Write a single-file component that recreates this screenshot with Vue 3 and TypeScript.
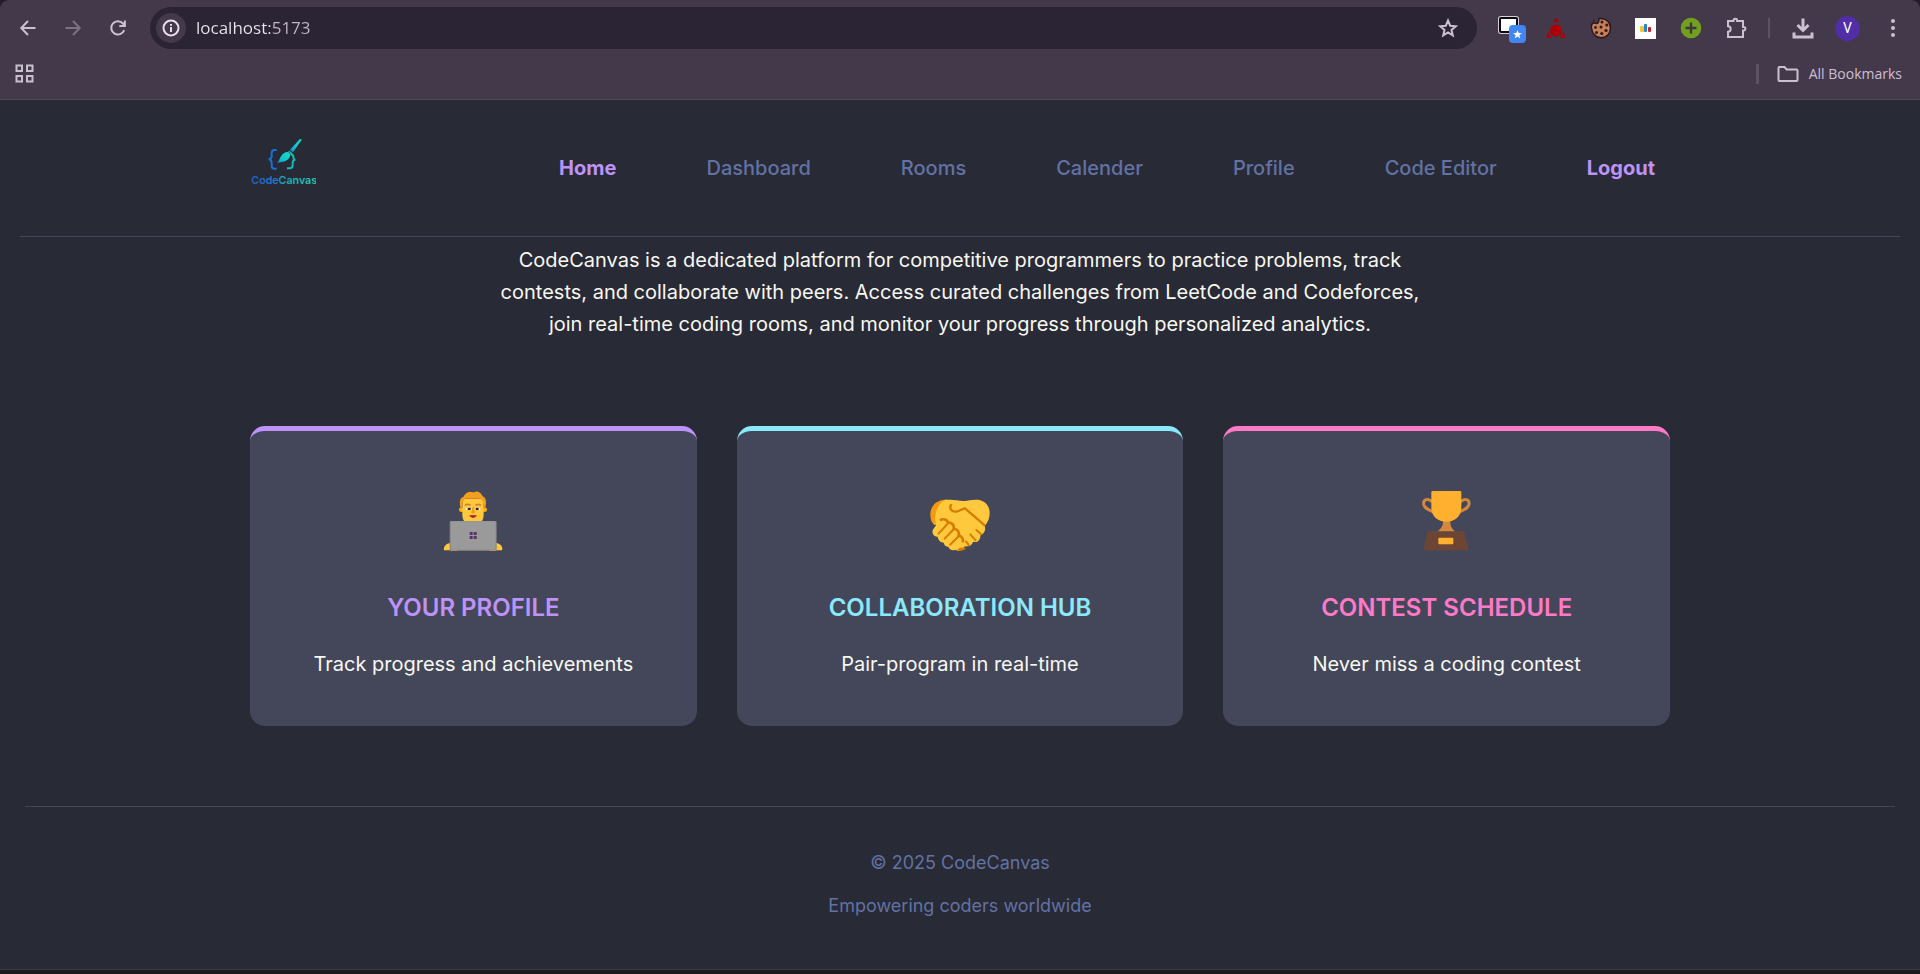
<script setup lang="ts">
import { ref } from 'vue'

interface NavItem {
  label: string
  strong: boolean
}

interface Card {
  kind: 'profile' | 'collab' | 'contest'
  title: string
  text: string
}

const address = ref<string>('localhost:5173')

const navItems: NavItem[] = [
  { label: 'Home', strong: true },
  { label: 'Dashboard', strong: false },
  { label: 'Rooms', strong: false },
  { label: 'Calender', strong: false },
  { label: 'Profile', strong: false },
  { label: 'Code Editor', strong: false },
]

const cards: Card[] = [
  { kind: 'profile', title: 'Your Profile', text: 'Track progress and achievements' },
  { kind: 'collab', title: 'Collaboration Hub', text: 'Pair-program in real-time' },
  { kind: 'contest', title: 'Contest Schedule', text: 'Never miss a coding contest' },
]
</script>

<template>
  <div class="window">
    <div class="chrome">
      <div class="toolbar">
        <button class="tool" type="button" aria-label="Back">
          <svg width="20" height="20" viewBox="0 0 20 20" class="line"><path d="M17.5 10H4M10 3 3.300 10 10 17" /></svg>
        </button>
        <button class="tool dim" type="button" aria-label="Forward">
          <svg width="20" height="20" viewBox="0 0 20 20" class="line"><path d="M2.500 10H16M10 3l6.700 7L10 17" /></svg>
        </button>
        <button class="tool" type="button" aria-label="Reload">
          <svg width="20" height="20" viewBox="0 0 20 20" class="line"><path d="M16.200 12.200A6.700 6.700 0 1 1 15 5.500L16.500 7.300M16.900 2.500V8H11.300" /></svg>
        </button>
        <div class="omnibox">
          <button class="info" type="button" aria-label="Site information">
            <svg width="18" height="18" viewBox="0 0 18 18" class="line"><circle cx="9" cy="9" r="7.500" /><path d="M9 8v5M9 5v1.800" /></svg>
          </button>
          <input v-model="address" class="address" type="text" aria-label="Address" spellcheck="false" />
          <button class="info plain" type="button" aria-label="Bookmark this page">
            <svg width="20" height="20" viewBox="0 0 20 20" class="line"><path d="M10 2.500l2.200 5.200 5.600.5-4.300 3.700 1.300 5.500-4.800-2.900-4.800 2.900 1.300-5.500L2.200 8.200l5.600-.5z" /></svg>
          </button>
        </div>
        <button class="tool" type="button" aria-label="Window bookmark extension">
          <svg width="30" height="38" viewBox="0 -3 30 38">
            <rect x="2" y="4" width="21" height="18" rx="3" fill="#d5cfda" />
            <rect x="4" y="6" width="17" height="14" rx="1" fill="#fff" stroke="#0c0a0e" stroke-width="2" />
            <rect x="13" y="13" width="17" height="18" rx="4" fill="#4285f4" />
            <path d="M21.500 18l1.200 3 3.200.2-2.500 2 .9 3.200-2.800-1.800-2.800 1.800.9-3.200-2.500-2 3.200-.2z" fill="#fff" />
          </svg>
        </button>
        <button class="tool" type="button" aria-label="Red extension">
          <svg width="22" height="22" viewBox="0 0 22 22" fill="#ad0006">
            <circle cx="11" cy="13.500" r="6" /><path d="M11 .5l3.500 5a8 8 0 0 0-7 0zM1 21l2.500-6.500A9 9 0 0 0 7.500 20.500zM21 21l-2.500-6.500a9 9 0 0 1-4 6z" />
          </svg>
        </button>
        <button class="tool" type="button" aria-label="Cookie extension">
          <svg width="22" height="22" viewBox="0 0 22 22">
            <path d="M9 1.500c-.5 3 .5 4.500-2 5-1.500.2-2-.5-3-.7-1.500.3-3 2-2.500 5.200C2 16.800 6 20.700 11 20.700c5.500 0 9.500-4.200 9.500-9.700S16.500 1 9 1.500z" fill="#c97f55" stroke="#241820" stroke-width="1.500" />
            <g fill="#2c1b22"><circle cx="12" cy="5" r="1.500" /><circle cx="16.800" cy="8" r="1.600" /><circle cx="11" cy="10" r="1.500" /><circle cx="5.500" cy="10.500" r="1.400" /><circle cx="16" cy="13.500" r="1.600" /><circle cx="6.500" cy="15.500" r="1.500" /><circle cx="11.800" cy="16.500" r="1.600" /></g>
            <path d="M3 3.500h1.500" stroke="#241820" stroke-width="1.500" />
          </svg>
        </button>
        <button class="tool" type="button" aria-label="Chart extension">
          <svg width="21" height="21" viewBox="0 0 21 21">
            <path d="M0 0h21v21H0z" fill="#fff" /><rect x="5" y="8" width="4" height="6" rx="1" fill="#f5c63a" /><rect x="9" y="6" width="3" height="8" rx="1" fill="#2385d0" /><rect x="13" y="9" width="3" height="5" rx="1" fill="#cb1d2a" />
          </svg>
        </button>
        <button class="tool" type="button" aria-label="Add extension">
          <svg width="22" height="22" viewBox="0 0 22 22"><circle cx="11" cy="11" r="10.300" fill="#739f1e" /><path d="M11 5.500v11M5.500 11h11" stroke="#3d3644" stroke-width="2.400" /></svg>
        </button>
        <button class="tool" type="button" aria-label="Extensions">
          <svg width="22" height="22" viewBox="0 0 22 22" class="line">
            <path d="M3 4h5.500V3.500a1.800 1.800 0 0 1 3.600 0V4H18v6h.6a1.800 1.800 0 0 1 0 3.600H18V20H3v-5.200c3.600-.3 3.600-5.300 0-5.600z" />
          </svg>
        </button>
        <span class="divider"></span>
        <button class="tool" type="button" aria-label="Downloads">
          <svg width="22" height="22" viewBox="0 0 22 22" class="line heavy"><path d="M11 1.500v12M5.500 8l5.500 5.500L16.500 8M2 15.500V20h18v-4.500" /></svg>
        </button>
        <button class="tool" type="button" aria-label="Account"><span class="avatar">V</span></button>
        <button class="tool" type="button" aria-label="Menu">
          <svg width="20" height="20" viewBox="0 0 20 20" fill="#cdbfd3"><circle cx="10" cy="3" r="2" /><circle cx="10" cy="10" r="2" /><circle cx="10" cy="17" r="2" /></svg>
        </button>
      </div>
      <div class="bookmarks">
        <button class="apps" type="button" aria-label="Tab groups">
          <svg width="19" height="19" viewBox="0 0 19 19" fill="none" stroke="#c9c0cf" stroke-width="2"><path d="M1.500 1.500h5.500v5.500H1.500zM12 1.500h5.500v5.500H12zM1.500 12h5.500v5.500H1.500zM12 12h5.500v5.500H12z" /></svg>
        </button>
        <span class="divider wide"></span>
        <button class="all" type="button">
          <svg width="22" height="18" viewBox="0 0 22 18" class="line"><path d="M2.500 2h5l2.200 2.500h9.800q1 0 1 1V15q0 1-1 1h-17q-1 0-1-1V3q0-1 1-1z" /></svg>
          All Bookmarks
        </button>
      </div>
    </div>

    <div class="page">
      <header class="header">
        <nav class="nav" aria-label="Main">
          <a class="logo" href="#" aria-label="CodeCanvas home">
            <svg width="66" height="72" viewBox="60 36 198 216">
              <defs>
                <linearGradient id="brand" gradientUnits="userSpaceOnUse" x1="65" y1="0" x2="255" y2="0">
                  <stop offset="0" stop-color="#1f5fc4" /><stop offset=".4" stop-color="#1c7fd0" /><stop offset=".5" stop-color="#18acb5" /><stop offset="1" stop-color="#1fcbb4" />
                </linearGradient>
                <linearGradient id="brush" x1="0" y1="1" x2="1" y2="0">
                  <stop offset="0" stop-color="#1582d8" /><stop offset=".45" stop-color="#12c7cf" /><stop offset="1" stop-color="#12dfc0" />
                </linearGradient>
              </defs>
              <path d="M140 90h-6q-9 0-9 9v9q0 9-9 10 9 1 9 10v9q0 9 9 9h6" fill="none" stroke="#1771d2" stroke-width="6" />
              <path d="M181 103h1q8 0 8 8 0 7 6 8-8 1-8 9v8q0 9-9 9h-8" fill="none" stroke="#14bcae" stroke-width="6" />
              <path d="M138 130c10-5 9-13 16-23 6-9 18-14 24-9 6 8 0 19-8 23-10 6-20 5-32 9z" fill="url(#brush)" />
              <path d="M180 89l9 8 25-36q1-6-5-3z" fill="url(#brush)" />
              <path d="M176 93l10 8" stroke="#12c8c0" stroke-width="4" />
              <text x="64" y="193" class="wordmark" fill="url(#brand)">CodeCanvas</text>
            </svg>
          </a>
          <div class="links">
            <a v-for="item in navItems" :key="item.label" href="#" :class="{ strong: item.strong }">{{ item.label }}</a>
            <button class="strong" type="button">Logout</button>
          </div>
        </nav>
      </header>

      <main class="main">
        <p class="intro">
          CodeCanvas is a dedicated platform for competitive programmers to practice problems, track contests, and
          collaborate with peers. Access curated challenges from LeetCode and Codeforces, join real-time coding rooms,
          and monitor your progress through personalized analytics.
        </p>

        <section class="cards">
          <article v-for="card in cards" :key="card.kind" class="card" :class="card.kind">
            <svg v-if="card.kind === 'profile'" width="60" height="60" viewBox="70 93 180 180" aria-hidden="true">
              <path d="M73 271c-3-11 8-22 20-22h134c14 0 24 11 20 22z" fill="#ffc83d" />
              <circle cx="125" cy="149" r="7" fill="#ffb000" /><circle cx="195" cy="149" r="7" fill="#ffb000" />
              <path d="M128 117h64v44c0 18-6 26-16 28h-32c-10-2-16-10-16-28z" fill="#ffc83d" />
              <path d="M122 142c-3-17-2-28 9-31 4-10 13-17 22-16q7 3 14 0c9-2 17 4 22 14 11 5 12 18 8 33l-5-1c0-14-3-21-10-25h-44c-8 4-11 12-11 25z" fill="#f29f1f" />
              <path d="M135 134q7-6 18-1v4q-10-3-18 1zM185 134q-7-6-18-1v4q10-3 18 1z" fill="#d67b2d" />
              <path d="M138 150q2-9 9-8 8 0 9 8zM164 150q1-8 9-8 7-1 9 8z" fill="#fff" />
              <path d="M144 143h9v7h-9zM168 143h9v7h-9z" fill="#2c2420" />
              <path d="M158 142h5l3 16q-5 5-11 0z" fill="#f59c16" />
              <path d="M149 166h23q-5 8-12 8-8 0-11-8z" fill="#b7123b" />
              <rect x="90" y="183" width="141" height="89" rx="4" fill="#858285" />
              <rect x="93" y="184" width="135" height="85" rx="3" fill="#9b9a9a" />
              <path d="M93 271h20M210 271h20" stroke="#b79b58" stroke-width="3" />
              <path d="M150 216h9v9h-9zM162 216h9v9h-9zM150 228h9v9h-9zM162 228h9v9h-9z" fill="#533568" />
            </svg>
            <svg v-else-if="card.kind === 'collab'" width="60" height="60" viewBox="90 63 180 180" aria-hidden="true">
              <path d="M145 90c-33-4-54 17-54 44 0 15 5 25 12 31l28-2z" fill="#f59a0c" />
              <path d="M140 90c16-3 33 2 51 3 17-1 34-6 50-2 18 5 28 21 28 37 0 17-5 28-15 40 3 10 1 18-6 24 0 0-5 3-7 5 0 9-5 19-14 19-4 0-8-1-8-1-2 8-8 14-15 14-6 1-10 0-10 0-4 8-10 13-18 13-6 0-10-3-10-3-9 4-18 0-21-9-7 0-13-5-14-12-8 0-15-5-17-14l-1-4c-8 0-14-4-15-11-3-9 5-14 10-23-8-28 3-68 32-78z" fill="#ffc83d" />
              <path d="M154 102c-8 15 2 26 18 22 10-2 14-8 23-9l60 52" fill="none" stroke="#d67d00" stroke-width="7" stroke-linejoin="round" />
              <path d="M120 151c9-6 22-3 24 7 11-1 20 7 17 19 11 0 18 8 15 20 10 2 15 10 12 20" fill="none" stroke="#d67d00" stroke-width="8" />
              <path d="M142 162l-26 29M159 180l-25 26M176 199l-26 25M229 180l14 12M211 193l16 18M198 214l9 12" fill="none" stroke="#d67d00" stroke-width="6" stroke-linecap="round" />
              <path d="M173 237l7-4q7-1 15 0l3 3q-12 9-25 5z" fill="#d67d00" />
            </svg>
            <svg v-else width="60" height="60" viewBox="80 63 180 180" aria-hidden="true">
              <g fill="none" stroke="#d3883e" stroke-width="9"><path d="M126 96c-13-14-28-7-26 7 2 12 14 15 32 25" /><path d="M210 96c13-14 28-7 26 7-2 12-14 15-32 25" /></g>
              <path d="M158 150h22c-1 19 4 25 15 35h-54c12-10 18-17 17-35z" fill="#d3883e" />
              <path d="M127 63h82q4 0 4 4v46c0 25-19 42-45 42s-45-17-45-42V67q0-4 4-4z" fill="#ffb02e" />
              <path d="M116 184h101q4 0 5 4l12 49q1 4-3 4H103q-4 0-3-4l12-49q1-4 4-4z" fill="#6d4534" />
              <rect x="144" y="203" width="45" height="20" rx="3" fill="#ffb02e" />
            </svg>
            <h2>{{ card.title }}</h2>
            <p>{{ card.text }}</p>
          </article>
        </section>
      </main>

      <footer class="footer">
        <p>© 2025 CodeCanvas</p>
        <p>Empowering coders worldwide</p>
      </footer>
    </div>
  </div>
</template>

<style>
body {
  margin: 0;
  background: #1c1c1e;
}
</style>

<style scoped>
.window {
  display: flex;
  flex-direction: column;
  box-sizing: border-box;
  min-height: 100vh;
  padding-bottom: 4px;
  background: #1c1c1e;
  font-family: Inter, 'Liberation Sans', sans-serif;
}

button {
  padding: 0;
  border: 0;
  background: none;
  color: inherit;
  font: inherit;
  cursor: pointer;
}

svg {
  display: block;
  flex: none;
}

.line {
  fill: none;
  stroke: currentColor;
  stroke-width: 2;
}

.heavy {
  stroke-width: 3;
}

/* Browser frame */
.chrome {
  border-bottom: 1px solid #4d4953;
  background: #231c2c;
  color: #cdbfd3;
  font-family: 'Open Sans', 'Noto Sans', sans-serif;
}

.toolbar {
  display: flex;
  align-items: center;
  height: 56px;
  padding: 0 5px;
  border-radius: 9px 9px 0 0;
  background: #43394b;
}

.tool {
  display: flex;
  flex: none;
  align-items: center;
  justify-content: center;
  width: 45px;
  height: 42px;
}

.dim {
  color: #7d7186;
}

.omnibox {
  display: flex;
  flex: 1;
  align-items: center;
  height: 42px;
  margin: 0 11px 0 10px;
  padding: 0 14px 0 6px;
  box-sizing: border-box;
  border-radius: 21px;
  background: #2b2435;
}

.info {
  display: flex;
  flex: none;
  align-items: center;
  justify-content: center;
  width: 30px;
  height: 30px;
  border-radius: 15px;
  background: #43394b;
  color: #e6deea;
}

.plain {
  background: none;
  color: #cdbfd3;
}

.address {
  flex: 1;
  min-width: 0;
  height: 30px;
  margin-left: 10px;
  padding: 0;
  border: 0;
  outline: 0;
  background: linear-gradient(90deg, #ece6f0 74px, #c3b8cb 74px);
  background-clip: text;
  color: transparent;
  caret-color: #ece6f0;
  font: 17px/30px 'Open Sans', 'Noto Sans', sans-serif;
}

.divider {
  flex: none;
  width: 2px;
  height: 20px;
  margin: 0 10px;
  background: #5d5166;
}

.wide {
  width: 3px;
}

.avatar {
  width: 25px;
  height: 25px;
  border-radius: 50%;
  background: #512da8;
  color: #fff;
  font: 14px/25px Roboto, sans-serif;
  text-align: center;
}

.bookmarks {
  display: flex;
  align-items: center;
  height: 43px;
  padding: 0 18px 8px 15px;
  box-sizing: border-box;
  background: #43394b;
}

.apps {
  margin-right: auto;
}

.all {
  display: flex;
  align-items: center;
  gap: 10px;
  margin-left: 8px;
  font-size: 14px;
  line-height: 20px;
}

/* Application */
.page {
  flex: 1;
  border-bottom: 1px solid #3c3c40;
  background: #282a36;
  color: #f8f8f2;
  font-size: 20px;
  line-height: 32px;
}

.header {
  margin: 0 20px;
  border-bottom: 1px solid #44475a;
}

.nav {
  display: flex;
  align-items: center;
  justify-content: space-between;
  max-width: 1420px;
  height: 136px;
  margin: 0 auto;
}

.wordmark {
  font-family: Inter, sans-serif;
  font-size: 32px;
  font-weight: 600;
}

.links {
  display: flex;
  gap: 90px;
  padding-right: 15px;
  font-weight: 500;
  white-space: nowrap;
}

.links a {
  color: #6272a4;
  text-decoration: none;
}

.links .strong {
  color: #bd93f9;
  font-weight: 700;
}

.main {
  max-width: 1420px;
  margin: 0 auto;
  padding: 7px 20px 80px;
}

.intro {
  max-width: 950px;
  margin: 0 auto 86px;
  text-align: center;
}

.cards {
  display: grid;
  grid-template-columns: repeat(3, 1fr);
  gap: 40px;
}

.card {
  display: flex;
  flex-direction: column;
  align-items: center;
  padding: 60px 20px 46px;
  border-top: 5px solid currentColor;
  border-radius: 15px;
  background: #44475a;
  text-align: center;
}

.profile {
  color: #bd93f9;
}

.collab {
  color: #8be9fd;
}

.contest {
  color: #ff79c6;
}

.card h2 {
  margin: 37px 0 20px;
  font-size: 24px;
  font-weight: 600;
  line-height: 40px;
  text-transform: uppercase;
}

.card p {
  margin: 0;
  color: #f8f8f2;
}

.footer {
  display: grid;
  gap: 15px;
  margin: 0 25px;
  padding: 42px 0 48px;
  border-top: 1px solid #44475a;
  color: #6272a4;
  font-size: 18px;
  line-height: 28px;
  text-align: center;
}

.footer p {
  margin: 0;
}
</style>
